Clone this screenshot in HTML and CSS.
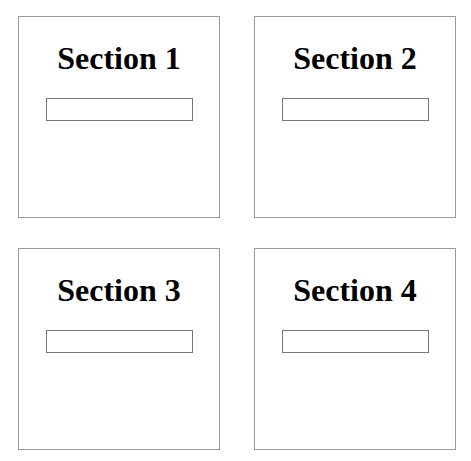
FILE: index.html
```html
<!DOCTYPE html>
<html lang="en">
<head>
  <meta charset="UTF-8">
  <meta name="viewport" content="width=device-width, initial-scale=1.0">
  <title>Sections</title>
  <link rel="stylesheet" href="styles.css">
</head>
<body>
  <div class="grid">
    <div class="section">
      <h1>Section 1</h1>
      <input type="text" class="field">
    </div>
    <div class="section">
      <h1>Section 2</h1>
      <input type="text" class="field">
    </div>
    <div class="section">
      <h1>Section 3</h1>
      <input type="text" class="field">
    </div>
    <div class="section">
      <h1>Section 4</h1>
      <input type="text" class="field">
    </div>
  </div>
</body>
</html>
```

FILE: styles.css
```css
body {
  margin: 0;
  font-family: "Liberation Serif", "Times New Roman", serif;
  background-color: #fff;
  color: #000;
}
.grid {
  display: grid;
  grid-template-columns: repeat(2, 202px);
  column-gap: 34px;
  row-gap: 30px;
  padding: 16px 0 0 18px;
}
.section {
  box-sizing: border-box;
  height: 202px;
  border: 1px solid #999;
  text-align: center;
}
.section h1 {
  font-size: 32px;
  margin: 23px 0 21px;
  line-height: 37px;
}
.field {
  box-sizing: border-box;
  display: block;
  width: 147px;
  height: 23px;
  margin: 0 auto;
  border: 1px solid #767676;
  padding: 1px 2px;
  font-size: 13px;
}
```
